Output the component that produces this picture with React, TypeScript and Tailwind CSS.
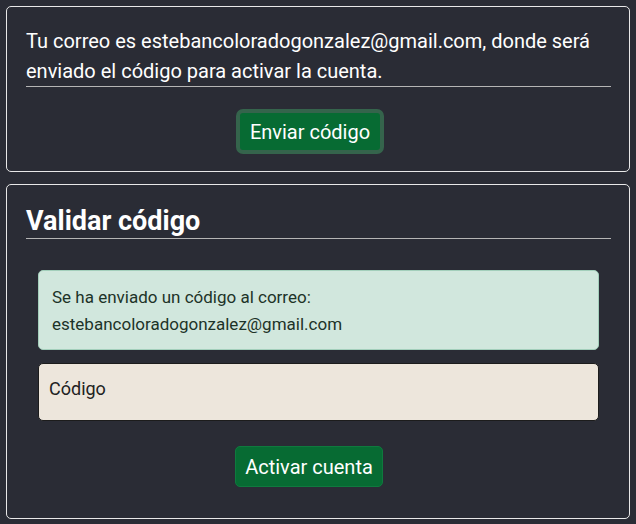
export default function App() {
  return (
    <div className="min-h-[524px] bg-[#2a2c35] px-[6px] py-[6px] font-['Roboto',sans-serif]">
      <div className="rounded-[5px] border border-[#e8e8e8] pl-[19px] pr-[18px] pt-[19px] pb-[17px]">
        <p className="border-b border-[#b5b5b5] text-[20px] leading-[30px] text-white">
          Tu correo es estebancoloradogonzalez@gmail.com, donde será enviado el código para activar la cuenta.
        </p>
        <div className="mt-[22px] pl-[210px]">
          <button className="flex h-[45px] w-[148px] items-center justify-center rounded-[7px] border-4 border-[#35644c] bg-[#076b33] text-[20px] text-white">
            Enviar código
          </button>
        </div>
      </div>

      <div className="mt-[12px] rounded-[5px] border border-[#e8e8e8] pl-[19px] pr-[18px] pt-[20px] pb-[31px]">
        <h2 className="border-b border-[#b5b5b5] pb-[1px] text-[27px] font-bold leading-[32px] text-white">
          Validar código
        </h2>
        <div className="mx-[12px] mt-[31px] rounded-[5px] border border-[#a3cfbb] bg-[#d1e7dd] px-[13px] pt-[13px] pb-[11px] text-[17px] leading-[27px] text-[#1d3328]">
          Se ha enviado un código al correo:
          <br />
          estebancoloradogonzalez@gmail.com
        </div>
        <div className="mx-[12px] mt-[13px] flex h-[58px] items-start rounded-[5px] border border-[#1c1c1c] bg-[#ede6dc] px-[10px] pt-[13px] text-[18px] leading-[24px] text-[#222]">
          Código
        </div>
        <div className="mt-[25px] pl-[209px]">
          <button className="flex h-[41px] w-[148px] items-center justify-center rounded-[5px] border border-[#0f7a3e] bg-[#076b33] text-[20px] text-white">
            Activar cuenta
          </button>
        </div>
      </div>
    </div>
  );
}
